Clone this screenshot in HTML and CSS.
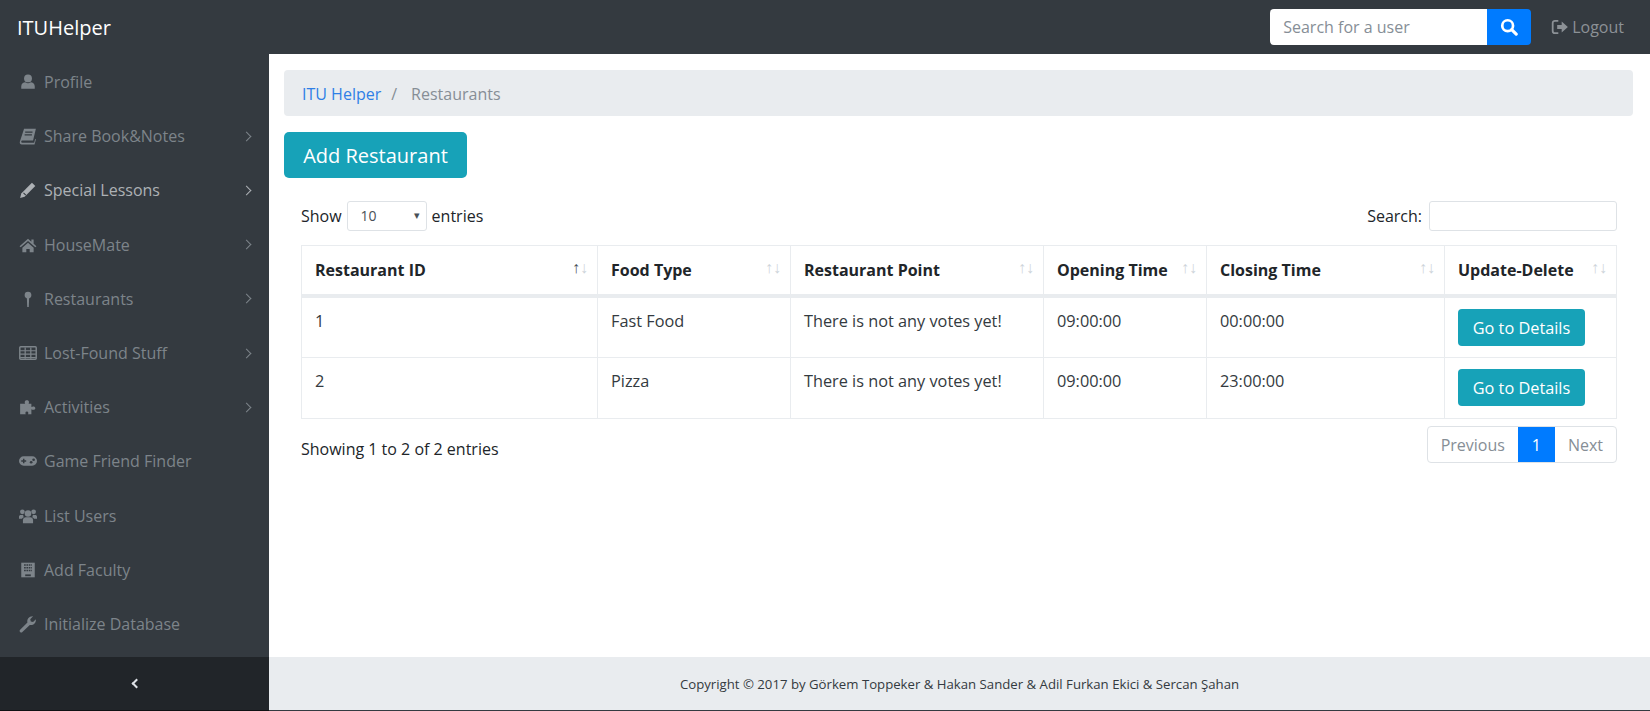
FILE: index.html
```html
<!DOCTYPE html>
<html lang="en">

<head>
    <meta charset="UTF-8">
    <title>ITUHelper</title>
    <link rel="stylesheet" href="styles.css">
</head>

<body>
    <!-- top bar -->
    <nav class="topbar">
        <a class="brand" href="#">ITUHelper</a>
        <form class="user-search">
            <input class="user-search-input" type="text" placeholder="Search for a user">
            <button class="user-search-btn" type="button" aria-label="Search">
                <svg class="icon-search" viewBox="0 0 16 16"><circle cx="6.8" cy="6.8" r="4.8" fill="none" stroke="#fff" stroke-width="2.4"/><path d="M10.4 10.4l4 4" stroke="#fff" stroke-width="2.8" stroke-linecap="round"/></svg>
            </button>
        </form>
        <a class="logout" href="#">
            <svg class="icon" viewBox="0 0 16 16"><path d="M6.5 2.5H3.5A2 2 0 0 0 1.5 4.5v7a2 2 0 0 0 2 2h3" fill="none" stroke="currentColor" stroke-width="1.6"/><path d="M5.5 6.2h4V3.2L15 8l-5.500 4.800V9.800h-4z" fill="currentColor"/></svg>
            Logout
        </a>
    </nav>

    <div class="page">
        <!-- side menu -->
        <aside class="sidenav">
            <ul class="sidenav-list">
                <li class="sidenav-item"><svg class="icon" viewBox="0 0 16 16"><circle cx="8" cy="4.800" r="3.500" fill="currentColor"/><path d="M2 14v-2.200C2 9.500 4 8.500 5.500 8.300c1.500 1 3.500 1 5 0 1.500.2 3.500 1.200 3.500 3.500V14z" fill="currentColor"/></svg>Profile</li>
                <li class="sidenav-item has-sub"><svg class="icon" viewBox="0 0 16 16"><path d="M4.500 1.500H15l-2.500 10.500H3c-.8 0-1 .6-1 1s.4 1 1 1h10.500l.9-3.500.6.6-1.200 4.400H2.500C1.200 15.500.3 14.500.8 12.800z" fill="currentColor"/><path d="M5.500 4.500h6.500M5 7h6.500" stroke="#343a40"/></svg>Share Book&amp;Notes<span class="chevron"></span></li>
                <li class="sidenav-item has-sub is-hover"><svg class="icon" viewBox="0 0 16 16"><path d="M11.500 1.500l3 3-9.500 9.500-4 1 1-4z" fill="currentColor"/><path d="M4 10.500l2 2" stroke="#343a40"/></svg>Special Lessons<span class="chevron"></span></li>
                <li class="sidenav-item has-sub"><svg class="icon" viewBox="0 0 16 16"><path d="M8 2.500L.5 9l1 1L8 4.500 14.500 10l1-1-2.500-2.200V3h-2v2z" fill="currentColor"/><path d="M3 10.500L8 6l5 4.500V14.500H9.500v-3h-3v3H3z" fill="currentColor"/></svg>HouseMate<span class="chevron"></span></li>
                <li class="sidenav-item has-sub"><svg class="icon" viewBox="0 0 16 16"><circle cx="8" cy="4.500" r="3" fill="currentColor"/><path d="M7 7h2L8.700 15H7.300z" fill="currentColor"/></svg>Restaurants<span class="chevron"></span></li>
                <li class="sidenav-item has-sub"><svg class="icon" viewBox="0 0 16 16"><path d="M1.500 2.500h13a.8.8 0 0 1 .8.800v9.400a.8.800 0 0 1-.8.800h-13a.8.800 0 0 1-.8-.8V3.300a.8.800 0 0 1 .8-.8z" fill="none" stroke="currentColor" stroke-width="1.300"/><path d="M1 6h14M1 9h14M1 12h14" stroke="currentColor" stroke-width="1.100"/><path d="M5.500 3v10M10.500 3v10" stroke="currentColor" stroke-width="1.100"/></svg>Lost-Found Stuff<span class="chevron"></span></li>
                <li class="sidenav-item has-sub"><svg class="icon" viewBox="0 0 16 16"><path d="M1 5h4.500C4.800 4 5 2 7 2s2.200 2 1.500 3H11v3c1-.7 3.500-.8 3.500 1s-2.500 1.700-3.500 1v4.500H8c.5-1 .5-2.500-1-2.500s-1.500 1.500-1 2.500H1z" fill="currentColor"/></svg>Activities<span class="chevron"></span></li>
                <li class="sidenav-item"><svg class="icon" viewBox="0 0 16 16"><path d="M4.200 3.800h7.600a4.200 4.200 0 0 1 0 8.400H4.200a4.200 4.200 0 0 1 0-8.400z" fill="currentColor"/><path d="M2 8h4.400M4.200 5.900v4.200" stroke="#343a40" stroke-width="1.300"/><circle cx="10.800" cy="9.100" r="1.200" fill="#343a40"/><circle cx="13" cy="6.900" r="1.200" fill="#343a40"/></svg>Game Friend Finder</li>
                <li class="sidenav-item"><svg class="icon" viewBox="0 0 16 16"><circle cx="8" cy="5.800" r="2.900" fill="currentColor"/><circle cx="3" cy="4.300" r="2.100" fill="currentColor"/><circle cx="13" cy="4.300" r="2.100" fill="currentColor"/><path d="M3.500 14.500v-3C3.500 10 4.800 9 6 9h4c1.200 0 2.500 1 2.500 2.500v3z" fill="currentColor"/><path d="M0 10.500V8.500C0 7.500.8 7 1.500 7h2.300c-.2 1 .2 1.500.6 2-1 .3-1.700 1-1.800 1.500zM16 10.500V8.500C16 7.500 15.200 7 14.500 7h-2.300c.2 1-.2 1.500-.6 2 1 .3 1.700 1 1.800 1.500z" fill="currentColor"/></svg>List Users</li>
                <li class="sidenav-item"><svg class="icon" viewBox="0 0 16 16"><path d="M2 1.500h12v13H2z" fill="currentColor"/><path d="M4.500 3.500h7M4.500 6h7M4.500 8.500h7" stroke="#343a40" stroke-width="1.400" stroke-dasharray="1.500 .6"/><path d="M5.500 12.700h5" stroke="#343a40" stroke-width="1.600"/></svg>Add Faculty</li>
                <li class="sidenav-item"><svg class="icon" viewBox="0 0 16 16"><path d="M1 13.200L7.500 6.700C6.800 4 8.800 1 12.500 1.200L10 3.800l.5 2 2 .5 2.500-2.500c.3 3.700-2.700 5.700-5.400 5L3 15.200c-.6.600-1.400.600-2 0s-.6-1.400 0-2z" fill="currentColor"/></svg>Initialize Database</li>
            </ul>
            <div class="sidenav-toggle"><span class="chevron-left"></span></div>
        </aside>

        <div class="content">
            <main class="main">
                <ol class="breadcrumb">
                    <li><a href="#">ITU Helper</a></li>
                    <li class="crumb-sep">/</li>
                    <li class="crumb-active">Restaurants</li>
                </ol>

                <a class="btn-add" href="#">Add Restaurant</a>

                <div class="table-wrap">
                    <div class="table-tools">
                        <label class="tool-label">Show
                            <span class="select-box">
                                <select class="entries-select">
                                    <option>10</option>
                                </select>
                                <span class="select-arrow">&#9662;</span>
                            </span>
                            entries</label>
                        <label class="tool-label">Search: <input class="table-search" type="text"></label>
                    </div>

                    <table class="data-table">
                        <colgroup>
                            <col class="col-id">
                            <col class="col-food">
                            <col class="col-point">
                            <col class="col-open">
                            <col class="col-close">
                            <col class="col-action">
                        </colgroup>
                        <thead>
                            <tr>
                                <th>Restaurant ID<span class="sort"><b class="sort-on">&#8593;</b>&#8595;</span></th>
                                <th>Food Type<span class="sort">&#8593;&#8595;</span></th>
                                <th>Restaurant Point<span class="sort">&#8593;&#8595;</span></th>
                                <th>Opening Time<span class="sort">&#8593;&#8595;</span></th>
                                <th>Closing Time<span class="sort">&#8593;&#8595;</span></th>
                                <th>Update-Delete<span class="sort">&#8593;&#8595;</span></th>
                            </tr>
                        </thead>
                        <tbody>
                            <tr>
                                <td>1</td>
                                <td>Fast Food</td>
                                <td>There is not any votes yet!</td>
                                <td>09:00:00</td>
                                <td>00:00:00</td>
                                <td><a class="btn-details" href="#">Go to Details</a></td>
                            </tr>
                            <tr>
                                <td>2</td>
                                <td>Pizza</td>
                                <td>There is not any votes yet!</td>
                                <td>09:00:00</td>
                                <td>23:00:00</td>
                                <td><a class="btn-details" href="#">Go to Details</a></td>
                            </tr>
                        </tbody>
                    </table>

                    <div class="table-foot">
                        <p class="table-info">Showing 1 to 2 of 2 entries</p>
                        <ul class="pager">
                            <li class="pager-item">Previous</li>
                            <li class="pager-item is-active">1</li>
                            <li class="pager-item">Next</li>
                        </ul>
                    </div>
                </div>
            </main>

            <footer class="footer">Copyright © 2017 by Görkem Toppeker &amp; Hakan Sander &amp; Adil Furkan Ekici &amp; Sercan Şahan</footer>
        </div>
    </div>
</body>

</html>
```

FILE: styles.css
```css
* {
    box-sizing: border-box;
}

html,
body {
    height: 100%;
}

body {
    margin: 0;
    display: flex;
    flex-direction: column;
    overflow: hidden;
    font-family: "Open Sans", "Liberation Sans", sans-serif;
    font-size: 16px;
    line-height: 24px;
    color: #212529;
    background-color: #fff;
}

a {
    text-decoration: none;
}

ul,
ol {
    list-style: none;
    margin: 0;
    padding: 0;
}

/* top bar */
.topbar {
    height: 54px;
    flex: none;
    display: flex;
    align-items: center;
    padding: 0 26px 0 17px;
    background-color: #343a40;
}

.brand {
    margin-right: auto;
    padding-top: 2px;
    font-size: 20px;
    color: #fff;
}

.user-search {
    display: flex;
    height: 36px;
    margin-top: -1px;
}

.user-search-input {
    width: 217px;
    padding: 0 13px;
    border: 0;
    border-radius: 4px 0 0 4px;
    font: inherit;
    outline: none;
}

.user-search-input::placeholder {
    color: #868e96;
}

.user-search-btn {
    width: 44px;
    border: 0;
    padding: 0;
    display: flex;
    align-items: center;
    justify-content: center;
    border-radius: 0 4px 4px 0;
    background-color: #007bff;
}

.icon-search {
    width: 18px;
    height: 18px;
}

.logout {
    display: flex;
    align-items: center;
    margin-left: 20px;
    color: #8c9196;
}

.logout .icon {
    margin-right: 3px;
}

/* page body */
.page {
    flex: 1;
    display: flex;
    min-height: 0;
}

.sidenav {
    width: 269px;
    flex: none;
    display: flex;
    flex-direction: column;
    background-color: #343a40;
}

.sidenav-list {
    flex: 1;
    padding-top: 1px;
}

.sidenav-item {
    display: flex;
    align-items: center;
    height: 54.200px;
    padding: 0 16px 0 19px;
    color: #7d848a;
}

.sidenav-item.is-hover {
    color: #adb1b5;
}

.icon {
    width: 18px;
    height: 18px;
    flex: none;
    margin-right: 7px;
}

.chevron {
    width: 7px;
    height: 7px;
    margin-left: auto;
    margin-right: 3px;
    border-top: 1.300px solid currentColor;
    border-right: 1.300px solid currentColor;
    transform: rotate(45deg);
}

.sidenav-toggle {
    height: 54px;
    flex: none;
    display: flex;
    align-items: center;
    justify-content: center;
    background-color: #212529;
    border-bottom: 1px solid #0f1113;
}

.chevron-left {
    width: 7px;
    height: 7px;
    margin-left: 3px;
    border-left: 2px solid #dee2e6;
    border-bottom: 2px solid #dee2e6;
    transform: rotate(45deg);
}

.content {
    flex: 1;
    min-width: 0;
    display: flex;
    flex-direction: column;
}

.main {
    flex: 1;
    padding: 16px 17px 0 15px;
}

/* breadcrumb */
.breadcrumb {
    display: flex;
    align-items: center;
    height: 46px;
    padding: 1px 18px 0;
    margin-bottom: 16px;
    border-radius: 4px;
    background-color: #e9ecef;
}

.breadcrumb a {
    color: #2f7fe6;
}

.crumb-sep {
    margin: 0 14px 0 10px;
    color: #868e96;
}

.crumb-active {
    color: #868e96;
}

.btn-add {
    display: inline-block;
    height: 46px;
    width: 183px;
    text-align: center;
    border-radius: 5px;
    font-size: 20px;
    line-height: 48px;
    color: #fff;
    background-color: #17a2b8;
}

/* table */
.table-wrap {
    padding: 23px 16px 0 17px;
}

.table-tools {
    display: flex;
    justify-content: space-between;
    align-items: center;
    height: 30px;
    margin-bottom: 14px;
}

.tool-label {
    display: flex;
    align-items: center;
}

.select-box {
    position: relative;
    display: inline-block;
    margin: 0 5px;
}

.entries-select {
    display: block;
    appearance: none;
    width: 80px;
    height: 30px;
    padding: 0 13px;
    border: 1px solid #dee2e6;
    border-radius: 3px;
    background-color: #fff;
    font: inherit;
    font-size: 14px;
    color: #495057;
}

.select-arrow {
    position: absolute;
    right: 7px;
    top: 2px;
    font-size: 11px;
    color: #495057;
}

.table-search {
    width: 188px;
    height: 30px;
    margin-left: 7px;
    border: 1px solid #dee2e6;
    border-radius: 3px;
}

.data-table {
    width: 100%;
    table-layout: fixed;
    border-collapse: collapse;
}

.col-id {
    width: 296px;
}

.col-food {
    width: 193px;
}

.col-point {
    width: 253px;
}

.col-open {
    width: 163px;
}

.col-close {
    width: 238px;
}

.data-table th,
.data-table td {
    border: 1px solid #e9ecef;
    padding: 11px 13px;
    text-align: left;
    vertical-align: top;
}

.data-table th {
    position: relative;
    height: 50px;
    padding-top: 12px;
    border-bottom: 4px solid #e9ecef;
    font-weight: 700;
    color: #212529;
}

.data-table td {
    height: 61px;
    font-size: 16.300px;
    color: #343a40;
}

.sort {
    position: absolute;
    right: 9px;
    top: 9px;
    font-size: 16px;
    font-weight: 400;
    color: #ced4da;
}

.sort-on {
    font-weight: 400;
    color: #495057;
}

.btn-details {
    display: block;
    width: 127px;
    height: 37px;
    text-align: center;
    line-height: 38px;
    border-radius: 4px;
    color: #fff;
    background-color: #17a2b8;
}

.table-foot {
    display: flex;
    justify-content: space-between;
    align-items: flex-start;
    padding-top: 7px;
}

.table-info {
    margin: 11px 0 0;
}

.pager {
    display: flex;
    height: 37px;
    border: 1px solid #dee2e6;
    border-radius: 4px;
    color: #868e96;
}

.pager-item {
    padding: 0 13px;
    line-height: 37px;
}

.pager-item.is-active {
    width: 37px;
    padding: 0;
    text-align: center;
    color: #fff;
    background-color: #007bff;
}

/* footer */
.footer {
    height: 54px;
    flex: none;
    display: flex;
    align-items: center;
    justify-content: center;
    padding-top: 1px;
    font-size: 13.200px;
    color: #343a40;
    background-color: #e9ecef;
    border-bottom: 1px solid #343a40;
}
```
